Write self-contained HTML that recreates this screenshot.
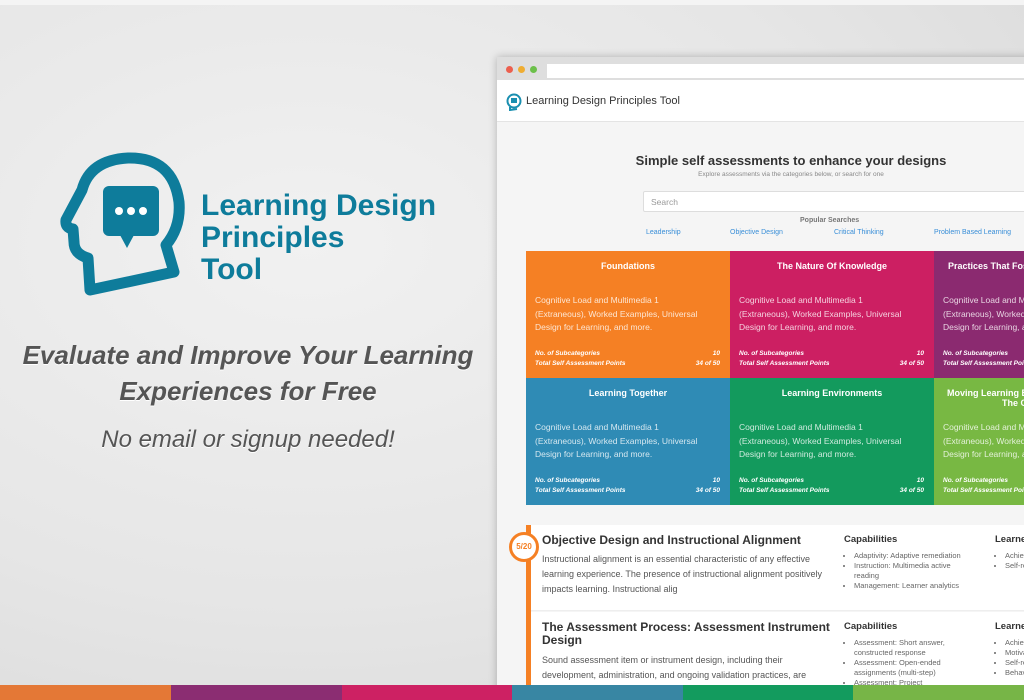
<!DOCTYPE html>
<html><head><meta charset="utf-8"><style>
*{margin:0;padding:0;box-sizing:border-box}
body{width:1024px;height:700px;overflow:hidden;position:relative;font-family:"Liberation Sans",sans-serif;background:radial-gradient(ellipse at 30% 35%,#f1f1f1 0%,#e6e6e6 55%,#d8d8d8 100%)}
.abs{position:absolute}
.brand{left:201px;top:190px;color:#0e7c9b;font-weight:bold;font-size:30px;line-height:32px}
.tag{left:0;width:496px;text-align:center;color:#555;font-style:italic;text-shadow:0 1px 0 #fff}
.win{left:497px;top:57px;width:540px;height:640px;background:#f5f5f5;box-shadow:0 0 8px rgba(0,0,0,.25);overflow:hidden}
.tb{height:23px;background:#dedede;position:relative}
.dot{position:absolute;top:9px;width:7px;height:7px;border-radius:50%}
.hdr{height:42px;background:#fff;border-bottom:1px solid #e4e4e4;position:relative}
.tile{position:absolute;width:204px;height:127px;color:#fff}
.tile h4{text-align:center;font-size:9px;margin-top:10px}
.tile p{position:absolute;left:9px;top:43px;font-size:8.5px;line-height:13.5px;color:rgba(255,255,255,.8)}
.tile .s{position:absolute;left:9px;right:10px;top:98px;font-size:6.5px;font-style:italic;font-weight:bold;line-height:10px}
.s span{float:right}
.card{position:absolute;left:33px;width:520px;background:#fff}
.card h3{font-size:12px;color:#333;position:absolute;left:12px}
.card .d{position:absolute;left:12px;width:285px;font-size:9px;line-height:15px;color:#555}
.cap{position:absolute;left:314px;font-size:9.5px;font-weight:bold;color:#333}
.cap ul{font-weight:normal;font-size:7.5px;color:#666;margin-top:6px;padding-left:10px;line-height:10px;width:120px}
.lr{left:465px}
.bar{position:absolute;top:685px;height:15px;width:171px}
</style></head><body>
<div class="abs" style="left:0;top:0;width:1024px;height:5px;background:#f4f4f4"></div>
<svg class="abs" style="left:60px;top:152px" width="130" height="150" viewBox="0 0 130 150">
<path d="M30 138 L28 106 Q14 102 14 90 L13 77 Q5 76 6 68 L22 38 Q30 8 68 6 Q113 5 119 50 Q121 75 106 93 L114 120 Z" fill="none" stroke="#0e7c9b" stroke-width="11" stroke-linejoin="round"/>
<rect x="43" y="34" width="56" height="50" rx="6" fill="#0e7c9b"/>
<path d="M60 83 L67 96 L74 83Z" fill="#0e7c9b"/>
<circle cx="59" cy="59" r="4" fill="#fff"/><circle cx="71" cy="59" r="4" fill="#fff"/><circle cx="83" cy="59" r="4" fill="#fff"/>
</svg>
<div class="abs brand">Learning Design<br>Principles<br>Tool</div>
<div class="abs tag" style="top:337px;font-size:26px;font-weight:bold;line-height:36px">Evaluate and Improve Your Learning<br>Experiences for Free</div>
<div class="abs tag" style="top:426px;font-size:24px">No email or signup needed!</div>

<div class="abs win">
<div class="tb"><div class="dot" style="left:9px;background:#ec5f4e"></div><div class="dot" style="left:21px;background:#efad32"></div><div class="dot" style="left:33px;background:#6cc04a"></div>
<div style="position:absolute;left:50px;top:7px;right:0;height:14px;background:#fff"></div></div>
<div class="hdr"><svg style="position:absolute;left:9px;top:13px" width="16" height="18" viewBox="0 0 16 18"><circle cx="8" cy="8" r="6.5" fill="none" stroke="#1a8fb0" stroke-width="2"/><rect x="5" y="5" width="6" height="5" fill="#1a8fb0"/><path d="M4 14 L4 17 L11 16" fill="none" stroke="#1a8fb0" stroke-width="2"/></svg>
<div style="position:absolute;left:29px;top:15px;font-size:11px;color:#333">Learning Design Principles Tool</div></div>
<div style="position:absolute;left:29px;width:530px;top:96px;text-align:center;font-size:13px;font-weight:bold;color:#333">Simple self assessments to enhance your designs</div>
<div style="position:absolute;left:29px;width:530px;top:114px;text-align:center;font-size:6.5px;color:#888">Explore assessments via the categories below, or search for one</div>
<div style="position:absolute;left:146px;top:134px;width:390px;height:21px;background:#fff;border:1px solid #ddd;border-radius:2px;font-size:8.5px;color:#999;padding:5px 7px">Search</div>
<div style="position:absolute;left:303px;top:160px;font-size:7px;font-weight:bold;color:#777">Popular Searches</div>
<div style="position:absolute;top:172px;font-size:7px;color:#3a8fd8;width:600px"><span style="position:absolute;left:149px">Leadership</span><span style="position:absolute;left:233px">Objective Design</span><span style="position:absolute;left:337px">Critical Thinking</span><span style="position:absolute;left:437px">Problem Based Learning</span></div>

<div class="tile" style="left:29px;top:194px;background:#f58024"><h4>Foundations</h4><p>Cognitive Load and Multimedia 1<br>(Extraneous), Worked Examples, Universal<br>Design for Learning, and more.</p><div class="s">No. of Subcategories<span>10</span><br>Total Self Assessment Points<span>34 of 50</span></div></div>
<div class="tile" style="left:233px;top:194px;background:#cc1f62"><h4>The Nature Of Knowledge</h4><p>Cognitive Load and Multimedia 1<br>(Extraneous), Worked Examples, Universal<br>Design for Learning, and more.</p><div class="s">No. of Subcategories<span>10</span><br>Total Self Assessment Points<span>34 of 50</span></div></div>
<div class="tile" style="left:437px;top:194px;background:#8b2a70"><h4 style="text-align:left;padding-left:14px">Practices That Foster</h4><p>Cognitive Load and Multimedia 1<br>(Extraneous), Worked Examples, Universal<br>Design for Learning, and more.</p><div class="s">No. of Subcategories<br>Total Self Assessment Points</div></div>
<div class="tile" style="left:29px;top:321px;background:#2f8bb5"><h4>Learning Together</h4><p>Cognitive Load and Multimedia 1<br>(Extraneous), Worked Examples, Universal<br>Design for Learning, and more.</p><div class="s">No. of Subcategories<span>10</span><br>Total Self Assessment Points<span>34 of 50</span></div></div>
<div class="tile" style="left:233px;top:321px;background:#139a5d"><h4>Learning Environments</h4><p>Cognitive Load and Multimedia 1<br>(Extraneous), Worked Examples, Universal<br>Design for Learning, and more.</p><div class="s">No. of Subcategories<span>10</span><br>Total Self Assessment Points<span>34 of 50</span></div></div>
<div class="tile" style="left:437px;top:321px;background:#78b843"><h4 style="text-align:left;padding-left:13px;line-height:10px">Moving Learning Beyond<br>&nbsp;&nbsp;&nbsp;&nbsp;&nbsp;&nbsp;&nbsp;&nbsp;&nbsp;&nbsp;&nbsp;&nbsp;&nbsp;&nbsp;&nbsp;&nbsp;&nbsp;&nbsp;&nbsp;&nbsp;&nbsp;&nbsp;The C</h4><p>Cognitive Load and Multimedia 1<br>(Extraneous), Worked Examples, Universal<br>Design for Learning, and more.</p><div class="s">No. of Subcategories<br>Total Self Assessment Points</div></div>

<div class="card" style="top:468px;height:86px;border-bottom:1px solid #eee">
<h3 style="top:8px">Objective Design and Instructional Alignment</h3>
<div class="d" style="top:27px">Instructional alignment is an essential characteristic of any effective learning experience. The presence of instructional alignment positively impacts learning. Instructional alig</div>
<div class="cap" style="top:9px">Capabilities<ul><li>Adaptivity: Adaptive remediation</li><li>Instruction: Multimedia active reading</li><li>Management: Learner analytics</li></ul></div>
<div class="cap lr" style="top:9px">Learner<ul><li>Achiev</li><li>Self-re</li></ul></div>
</div>
<div class="card" style="top:555px;height:100px">
<h3 style="top:9px;width:290px;line-height:13px">The Assessment Process: Assessment Instrument Design</h3>
<div class="d" style="top:41px">Sound assessment item or instrument design, including their development, administration, and ongoing validation practices, are</div>
<div class="cap" style="top:9px">Capabilities<ul><li>Assessment: Short answer, constructed response</li><li>Assessment: Open-ended assignments (multi-step)</li><li>Assessment: Project</li></ul></div>
<div class="cap lr" style="top:9px">Learner<ul><li>Achiev</li><li>Motiva</li><li>Self-re</li><li>Behav</li></ul></div>
</div>
<div style="position:absolute;left:29px;top:468px;width:5px;height:180px;background:#f58024"></div>
<div style="position:absolute;left:12px;top:475px;width:30px;height:30px;border-radius:50%;background:#fff;border:3px solid #f58024;font-size:8px;font-weight:bold;color:#f58024;text-align:center;line-height:24px">5/20</div>
</div>

<div class="bar" style="left:0;background:#e47836"></div>
<div class="bar" style="left:171px;background:#8b2d72"></div>
<div class="bar" style="left:342px;background:#cd2163"></div>
<div class="bar" style="left:512px;background:#3886a3"></div>
<div class="bar" style="left:683px;background:#139b5e"></div>
<div class="bar" style="left:853px;background:#77b547"></div>
</body></html>
